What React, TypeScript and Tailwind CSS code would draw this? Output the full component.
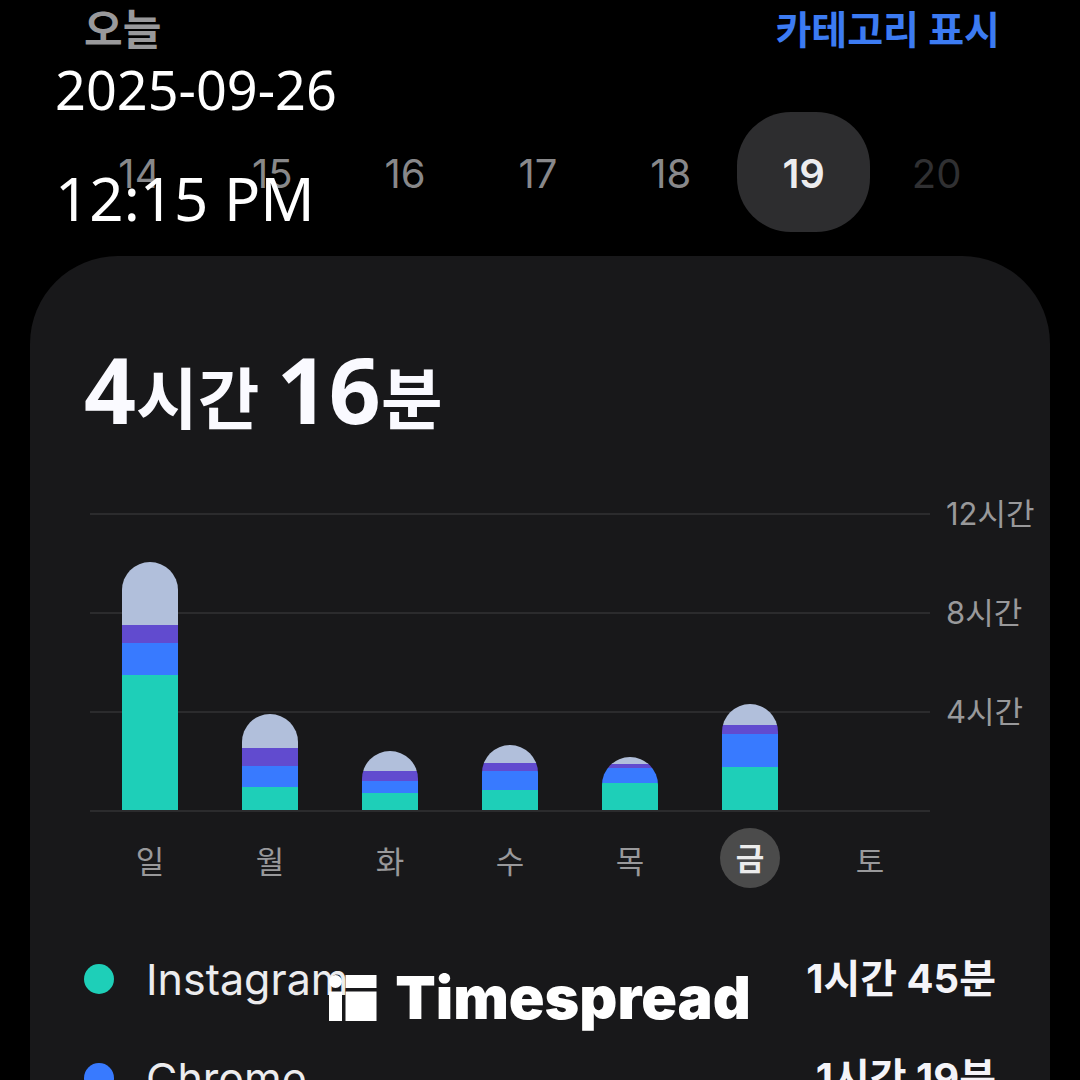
import clsx from 'clsx'

interface DayUsage {
  label: string
  // minutes, top segment first: other, third, second, first app
  minutes: number[]
}

interface AppUsage {
  name: string
  hours: number
  minutes: number
  dot: string
}

const SELECTED_DATE = 19
const LAST_DATE = 19
const DATES = [14, 15, 16, 17, 18, 19, 20]

const SELECTED_DAY = '금'
const WEEK: DayUsage[] = [
  { label: '일', minutes: [153, 44, 78, 327] },
  { label: '월', minutes: [82, 44, 51, 56] },
  { label: '화', minutes: [48, 24, 29, 41] },
  { label: '수', minutes: [43, 20, 46, 48] },
  { label: '목', minutes: [17, 10, 36, 65] },
  { label: '금', minutes: [51, 21, 79, 105] },
  { label: '토', minutes: [] },
]

const SEGMENT_COLORS = ['bg-[#b1bfdb]', 'bg-[#614bcf]', 'bg-[#387aff]', 'bg-[#1ecfb8]']
const GRID_LABELS = ['12시간', '8시간', '4시간', '']

// one grid step is four hours
const ROW_HEIGHT = 99
const toPixels = (minutes: number) => Math.round((minutes * ROW_HEIGHT) / 240)

const APPS: AppUsage[] = [
  { name: 'Instagram', hours: 1, minutes: 45, dot: 'bg-[#1ecfb8]' },
  { name: 'Chrome', hours: 1, minutes: 19, dot: 'bg-[#387aff]' },
]

function TopBar() {
  return (
    <header className="flex h-[60px] items-center justify-between pr-[80px] pl-[84px]">
      <h1 className="text-[42px] leading-[60px] font-bold text-[#99999b]">오늘</h1>
      <button type="button" className="text-[39px] leading-[60px] font-bold text-[#3c7bf2]">
        카테고리 표시
      </button>
    </header>
  )
}

function DateStrip() {
  return (
    <nav className="mt-[52px] grid grid-cols-7 pr-[77px] pl-[73px]">
      {DATES.map((date) => (
        <button
          key={date}
          type="button"
          disabled={date > LAST_DATE}
          className={clsx(
            'h-[120px] rounded-[54px] pt-[4px] text-[40px]',
            date === SELECTED_DATE && 'bg-[#2d2d2f] font-semibold text-[#ececee]',
            date < SELECTED_DATE && 'text-[#88888a]',
            date > LAST_DATE && 'text-[#303032]',
          )}
        >
          {date}
        </button>
      ))}
    </nav>
  )
}

function Bar({ minutes }: { minutes: number[] }) {
  return (
    <div className="w-[56px] overflow-hidden rounded-t-full">
      {minutes.map((value, index) => (
        <div key={index} className={SEGMENT_COLORS[index]} style={{ height: toPixels(value) }} />
      ))}
    </div>
  )
}

function WeekChart() {
  return (
    <section>
      <div className="grid">
        {/* Grid lines */}
        <div className="col-start-1 row-start-1 pl-[60px]">
          {GRID_LABELS.map((label, index) => (
            <div key={index} className="flex h-[99px] items-center">
              <div className="h-[2px] flex-1 bg-[#2b2b2d]" />
              <span className="w-[120px] pl-4 text-[31px] leading-[40px] whitespace-nowrap text-[#99999b]">
                {label}
              </span>
            </div>
          ))}
        </div>

        {/* Bars */}
        <div className="z-10 col-start-1 row-start-1 mr-[120px] ml-[60px] grid grid-cols-7 items-end justify-items-center pb-[50px]">
          {WEEK.map((day) => (
            <Bar key={day.label} minutes={day.minutes} />
          ))}
        </div>
      </div>

      <div className="mt-[-32px] mr-[120px] ml-[60px] grid grid-cols-7 justify-items-center">
        {WEEK.map((day) => (
          <span
            key={day.label}
            className={clsx(
              'size-[60px] rounded-full text-center text-[31px]',
              day.label === SELECTED_DAY
                ? 'bg-[#4b4b4b] leading-[62px] font-bold text-[#ececec]'
                : 'leading-[68px] text-[#99999b]',
            )}
          >
            {day.label}
          </span>
        ))}
      </div>
    </section>
  )
}

function AppList() {
  return (
    <ul className="mt-[61px] pr-[54px] pl-[54px]">
      {APPS.map((app) => (
        <li key={app.name} className="flex h-[99px] items-start">
          <div className="flex h-[60px] flex-1 items-center gap-8">
            <span className={clsx('size-[30px] rounded-full', app.dot)} />
            <span className="text-[43px] leading-[60px] text-[#ececee]">{app.name}</span>
          </div>
          <span className="text-[40px] leading-[60px] font-bold text-[#f4f4f8]">
            {app.hours}시간 {app.minutes}분
          </span>
        </li>
      ))}
    </ul>
  )
}

function Watermark() {
  return (
    <>
      <div className="absolute top-[59px] left-[55px] font-['Noto_Sans','Noto_Sans_CJK_KR',sans-serif] text-white">
        <p className="text-[54px] leading-[60px]">2025-09-26</p>
        <p className="mt-[34px] text-[60px] leading-[90px]">12:15 PM</p>
      </div>
      <div className="absolute inset-x-0 top-[964px] flex items-center justify-center gap-[18px] text-white">
        <svg width="48" height="46" viewBox="0 0 48 46" fill="currentColor" aria-hidden="true">
          <circle cx="6.5" cy="6.5" r="6.5" />
          <rect x="16.5" width="31" height="13" />
          <rect y="16.5" width="13" height="29.5" />
          <rect x="16.5" y="16.5" width="31" height="29.5" />
        </svg>
        <span className="text-[59px] leading-[68px] font-black">Timespread</span>
      </div>
    </>
  )
}

export default function App() {
  return (
    <div className="relative h-screen overflow-hidden bg-black font-['Inter','Noto_Sans_CJK_KR',sans-serif]">
      <TopBar />
      <DateStrip />
      <main className="mx-[30px] mt-[24px] min-h-screen rounded-t-[88px] bg-[#18181a] pt-[73px]">
        <h2 className="pl-[54px] font-['Noto_Sans','Noto_Sans_CJK_KR',sans-serif] text-[67px] leading-[120px] font-bold text-[#fafaff]">
          <span className="text-[91px]">4</span>시간 <span className="text-[91px]">16</span>분
        </h2>
        <div className="mt-[6px]">
          <WeekChart />
        </div>
        <AppList />
      </main>
      <Watermark />
    </div>
  )
}
